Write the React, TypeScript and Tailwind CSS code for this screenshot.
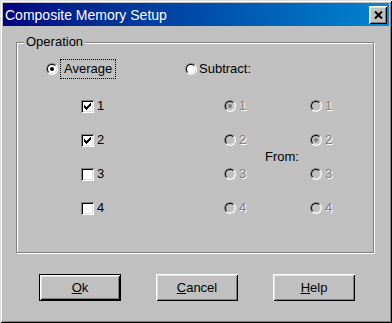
import type { ReactNode } from 'react';

function Radio({ checked, disabled }: { checked?: boolean; disabled?: boolean }) {
    return (
        <span className="inline-flex h-[12px] w-[12px] shrink-0 rounded-full border border-t-[#808080] border-l-[#808080] border-r-white border-b-white">
            <span
                className={`flex h-full w-full items-center justify-center rounded-full border border-t-black border-l-black border-r-[#dfdfdf] border-b-[#dfdfdf] ${
                    disabled ? 'bg-[#c0c0c0]' : 'bg-white'
                }`}
            >
                {checked && (
                    <span className={`h-[4px] w-[4px] rounded-full ${disabled ? 'bg-[#808080]' : 'bg-black'}`} />
                )}
            </span>
        </span>
    );
}

function Check({ checked }: { checked?: boolean }) {
    return (
        <span className="flex h-[13px] w-[13px] shrink-0 items-center justify-center bg-white shadow-[inset_1px_1px_0_#808080,inset_-1px_-1px_0_#fff,inset_2px_2px_0_#000,inset_-2px_-2px_0_#dfdfdf]">
            {checked && (
                <svg width="7" height="7" viewBox="0 0 7 7" shapeRendering="crispEdges">
                    <path
                        d="M6 0h1v1h-1z M5 1h2v1h-2z M0 2h1v1h-1z M4 2h3v1h-3z M0 3h2v1h-2z M3 3h3v1h-3z M0 4h5v1h-5z M1 5h3v1h-3z M2 6h1v1h-1z"
                        fill="#000"
                    />
                </svg>
            )}
        </span>
    );
}

// greyed-out label, embossed like the old Win32 look
function Dim({ children }: { children: ReactNode }) {
    return <span className="text-[#808080] [text-shadow:1px_1px_0_#fff]">{children}</span>;
}

function Btn({ children, primary }: { children: ReactNode; primary?: boolean }) {
    return (
        <button
            className={`flex h-[27px] w-[82px] items-center justify-center bg-[#c0c0c0] text-[13px] text-black ${
                primary
                    ? 'border border-black shadow-[inset_1px_1px_0_#fff,inset_-1px_-1px_0_#000,inset_2px_2px_0_#dfdfdf,inset_-2px_-2px_0_#808080]'
                    : 'shadow-[inset_1px_1px_0_#fff,inset_-1px_-1px_0_#000,inset_2px_2px_0_#dfdfdf,inset_-2px_-2px_0_#808080]'
            }`}
        >
            {children}
        </button>
    );
}

export default function App() {
    const rows = [1, 2, 3, 4];

    return (
        <div className="flex h-[323px] w-[392px] flex-col bg-[#c0c0c0] p-[3px] font-['Liberation_Sans',Arial,sans-serif] text-[13px] leading-[16px] text-black shadow-[inset_1px_1px_0_#dfdfdf,inset_-1px_-1px_0_#000,inset_2px_2px_0_#fff,inset_-2px_-2px_0_#808080]">
            {/* Title bar */}
            <div className="flex h-[23px] shrink-0 items-center justify-between bg-linear-to-r from-[#000080] to-[#1084d0] pl-[2px] pr-[2px]">
                <span className="text-[14px] text-white">Composite Memory Setup</span>
                <span className="flex h-[18px] w-[18px] items-center justify-center bg-[#c0c0c0] shadow-[inset_1px_1px_0_#fff,inset_-1px_-1px_0_#000,inset_2px_2px_0_#dfdfdf,inset_-2px_-2px_0_#808080]">
                    <svg width="9" height="8" viewBox="0 0 9 8">
                        <path d="M1 0.5 L8 7.5 M8 0.5 L1 7.5" stroke="#000" strokeWidth="2" />
                    </svg>
                </span>
            </div>

            {/* Operation group */}
            <div className="relative ml-[13px] mr-[15px] mt-[16px] h-[211px] border border-[#808080] shadow-[1px_1px_0_#fff,inset_1px_1px_0_#fff]">
                <span className="absolute -top-[9px] left-[7px] bg-[#c0c0c0] px-[2px]">Operation</span>

                <div className="grid grid-cols-[35px_104px_39px_41px_45px_1fr] grid-rows-[40px_34px_34px_34px_34px] pl-[29px] pt-[6px]">
                    <div className="col-span-2 flex items-center gap-[2px]">
                        <Radio checked />
                        <span className="border border-dotted border-black px-[3px] py-[1px]">Average</span>
                    </div>
                    <div className="col-span-4 flex items-center gap-[2px]">
                        <Radio />
                        <span>Subtract:</span>
                    </div>

                    {rows.map((n) => (
                        <div key={`c${n}`} className="col-start-2 flex items-center gap-[3px]" style={{ gridRowStart: n + 1 }}>
                            <Check checked={n < 3} />
                            <span>{n}</span>
                        </div>
                    ))}
                    {rows.map((n) => (
                        <div key={`a${n}`} className="col-start-4 flex items-center gap-[3px]" style={{ gridRowStart: n + 1 }}>
                            <Radio disabled checked={n === 1} />
                            <Dim>{n}</Dim>
                        </div>
                    ))}
                    <div className="col-start-5 row-span-2 row-start-3 flex items-center">From:</div>
                    {rows.map((n) => (
                        <div key={`b${n}`} className="col-start-6 flex items-center gap-[3px]" style={{ gridRowStart: n + 1 }}>
                            <Radio disabled checked={n === 2} />
                            <Dim>{n}</Dim>
                        </div>
                    ))}
                </div>
            </div>

            {/* Buttons */}
            <div className="ml-[36px] mt-[21px] flex gap-[35px]">
                <Btn primary>
                    <span className="underline">O</span>k
                </Btn>
                <Btn>
                    <span className="underline">C</span>ancel
                </Btn>
                <Btn>
                    <span className="underline">H</span>elp
                </Btn>
            </div>
        </div>
    );
}
